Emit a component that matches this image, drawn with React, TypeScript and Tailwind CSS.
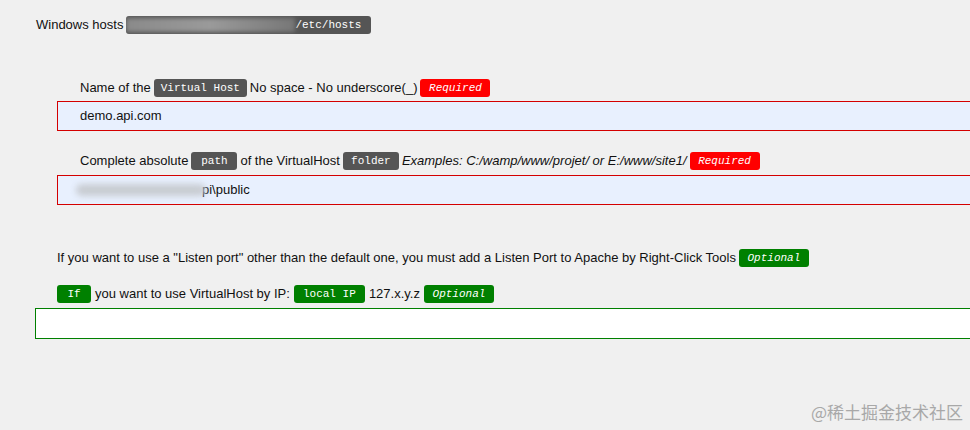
import React from "react";

type Tone = "dark" | "red" | "green";

const toneClass: Record<Tone, string> = {
  dark: "bg-[#555555] text-white",
  red: "bg-[#ff0000] text-white italic",
  green: "bg-[#008000] text-white italic",
};

function Badge({ tone = "dark", children, className = "" }: { tone?: Tone; children: React.ReactNode; className?: string }) {
  return (
    <span
      className={`inline-flex h-[18px] shrink-0 items-center justify-center whitespace-nowrap rounded-[3px] font-['Liberation_Mono',monospace] text-[11px] leading-none ${toneClass[tone]} ${className}`}
    >
      {children}
    </span>
  );
}

export default function App() {
  return (
    <div className="relative h-[430px] w-[970px] overflow-hidden bg-[#f0f0f0] font-['Liberation_Sans',Arial,sans-serif] text-[13px] text-[#111]">
      {/* hosts line */}
      <div className="mt-[16px] flex h-[18px] items-center gap-[3px] pl-[36px]">
        <span>Windows hosts</span>
        <span className="inline-flex h-[18px] w-[245px] items-center overflow-hidden rounded-[3px] bg-[#555555]">
          <span className="h-[14px] w-[170px] rounded-[2px] bg-gradient-to-r from-[#8a8a8a] via-[#9a9a9a] to-[#777] blur-[2px]" />
          <span className="ml-auto pr-[10px] font-['Liberation_Mono',monospace] text-[11px] text-white">/etc/hosts</span>
        </span>
      </div>

      <div className="pl-[57px]">
        {/* virtual host name */}
        <div className="mt-[45px] flex h-[18px] items-center gap-[3px] pl-[23px]">
          <span>Name of the</span>
          <Badge className="w-[93px]">Virtual Host</Badge>
          <span>No space - No underscore(_)</span>
          <Badge tone="red" className="w-[70px]">Required</Badge>
        </div>
        <div className="mt-[4px] flex h-[30px] w-[960px] items-center border border-[#d40000] bg-[#e8f0fe] pl-[22px]">
          demo.api.com
        </div>

        {/* path */}
        <div className="mt-[21px] flex h-[18px] items-center gap-[3px] pl-[23px]">
          <span>Complete absolute</span>
          <Badge className="w-[46px]">path</Badge>
          <span>of the VirtualHost</span>
          <Badge className="w-[56px]">folder</Badge>
          <span className="italic">Examples: C:/wamp/www/projet/ or E:/www/site1/</span>
          <Badge tone="red" className="w-[70px]">Required</Badge>
        </div>
        <div className="mt-[5px] flex h-[30px] w-[960px] items-center border border-[#d40000] bg-[#e8f0fe] pl-[18px]">
          <span className="h-[12px] w-[130px] rounded-[6px] bg-[#c8ccd2] blur-[3px]" />
          <span className="-ml-[4px]">pi\public</span>
        </div>

        {/* listen port */}
        <div className="mt-[44px] flex h-[18px] items-center gap-[3px]">
          <span>If you want to use a "Listen port" other than the default one, you must add a Listen Port to Apache by Right-Click Tools</span>
          <Badge tone="green" className="w-[70px]">Optional</Badge>
        </div>

        {/* by IP */}
        <div className="mt-[18px] flex h-[18px] items-center gap-[4px]">
          <Badge tone="green" className="w-[34px] not-italic">If</Badge>
          <span>you want to use VirtualHost by IP:</span>
          <Badge tone="green" className="w-[71px] not-italic">local IP</Badge>
          <span>127.x.y.z</span>
          <Badge tone="green" className="w-[70px]">Optional</Badge>
        </div>
      </div>
      <div className="ml-[35px] mt-[5px] h-[31px] w-[960px] border border-[#008000] bg-white" />

      <div className="absolute bottom-[6px] right-[7px] font-['Noto_Sans_CJK_SC',sans-serif] text-[17px] text-[#a8a8a8]">
        @稀土掘金技术社区
      </div>
    </div>
  );
}
